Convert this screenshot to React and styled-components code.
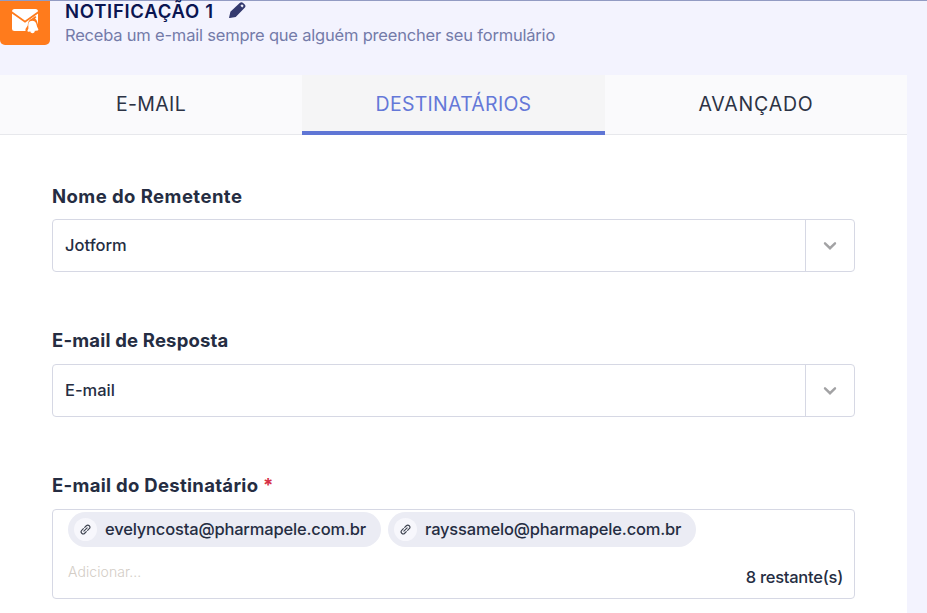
import React from 'react';
import styled, { createGlobalStyle } from 'styled-components';

const GlobalStyle = createGlobalStyle`
  *, *::before, *::after { box-sizing: border-box; }
  body {
    margin: 0;
    background: #f3f3fe;
    color: #252d42;
    font-family: Inter, "Open Sans", sans-serif;
    overflow: hidden;
  }
`;

const Page = styled.main`
  height: 613px;
  display: flex;
  flex-direction: column;
  border-top: 1px solid #929bc3;
`;

const Header = styled.header`
  height: 74px;
  flex: none;
  display: flex;
  gap: 15px;
`;

const Badge = styled.div`
  width: 50px;
  height: 44px;
  flex: none;
  background: #ff7b1c;
  border-radius: 0 0 5px 5px;
`;

const Heading = styled.div`
  display: flex;
  flex-direction: column;
`;

const TitleRow = styled.div`
  display: flex;
  align-items: flex-start;
  gap: 15px;
  height: 20px;
`;

const Title = styled.h1`
  margin: 0;
  font-size: 18.5px;
  line-height: 20px;
  font-weight: 600;
  letter-spacing: 0.72px;
  color: #0a1551;
  white-space: nowrap;
`;

const Subtitle = styled.p`
  margin: 3px 0 0;
  font-size: 16.5px;
  line-height: 22px;
  letter-spacing: -0.2px;
  color: #747ba9;
  white-space: nowrap;
`;

const Panel = styled.section`
  width: 907px;
  flex: 1;
  background: #fff;
`;

const Tabs = styled.nav`
  height: 60px;
  display: grid;
  grid-template-columns: 302px 303px 302px;
  background: #fafafc;
`;

const Tab = styled.button`
  border: 0;
  border-bottom: ${(p) => (p.$active ? '4px solid #5f76d5' : '1px solid #e7e8ec')};
  background: ${(p) => (p.$active ? '#f5f5f6' : 'transparent')};
  color: ${(p) => (p.$active ? '#6478d8' : '#2c3345')};
  font: 400 19.5px/24px Inter, "Open Sans", sans-serif;
  letter-spacing: ${(p) => p.$tracking}px;
  padding: ${(p) => (p.$active ? '2px 0 1px' : '0 0 1px')};
`;

const Form = styled.form`
  padding: 49px 52px 0;
  display: flex;
  flex-direction: column;
  gap: 56px;
`;

const Field = styled.div`
  display: flex;
  flex-direction: column;
  gap: ${(p) => p.$gap}px;
`;

const Label = styled.label`
  font-size: 18.5px;
  line-height: 24px;
  font-weight: 700;
  letter-spacing: ${(p) => p.$tracking}px;
  white-space: nowrap;
`;

const Required = styled.span`
  color: #d62f45;
`;

const Select = styled.div`
  height: 53px;
  display: flex;
  border: 1px solid #d6d8e4;
  border-radius: 4px;
`;

const Value = styled.div`
  flex: 1;
  display: flex;
  align-items: center;
  padding: 0 12px 1px;
  font-size: 16.5px;
  font-weight: 500;
`;

const Toggle = styled.div`
  width: 49px;
  display: flex;
  align-items: center;
  justify-content: center;
  border-left: 1px solid #d6d8e4;
`;

const Recipients = styled.div`
  height: 90px;
  flex: none;
  display: flex;
  flex-direction: column;
  justify-content: space-between;
  border: 1px solid #d6d8e4;
  border-radius: 4px;
  padding: 2px 11px 10px 15px;
`;

const Chips = styled.div`
  display: flex;
  gap: 7px;
`;

const Chip = styled.div`
  width: ${(p) => p.$width}px;
  height: 35px;
  display: flex;
  align-items: center;
  gap: 8px;
  padding: 0 0 1px 6px;
  border-radius: 18px;
  background: #ebecf4;
  font-size: 16.5px;
  font-weight: 500;
  letter-spacing: -0.18px;
  white-space: nowrap;
`;

const ChipIcon = styled.span`
  width: 23px;
  height: 23px;
  flex: none;
  display: flex;
  align-items: center;
  justify-content: center;
  border-radius: 50%;
  background: #f7f7fc;
`;

const Footer = styled.div`
  display: flex;
  justify-content: space-between;
  line-height: 22px;
`;

const Placeholder = styled.span`
  font-size: 14px;
  font-weight: 300;
  line-height: 12px;
  letter-spacing: 0.08px;
  color: #d3cdc6;
`;

const Remaining = styled.span`
  font-size: 16.5px;
  font-weight: 500;
  line-height: 22px;
  letter-spacing: -0.25px;
`;

const EnvelopeIcon = () => (
  <svg width="50" height="44" viewBox="0 0 50 44" aria-hidden="true">
    <rect x="12" y="8" width="26" height="22" rx="2.5" fill="#fff" />
    <path d="M11 10.8 25 20.7 39 10.8" fill="none" stroke="#ff7b1c" strokeWidth="1.9" />
    <path d="M25.5 31v-3l2.2-3.6c.2-3.4 1.5-5.8 4.3-6.8l3.2-2.6 1.6 1.6 2.4 14.4Z" fill="#ff7b1c" />
    <path d="M30 20.3c2.6-1.5 5.5-.3 6.3 2.5l.8 2.9 1.2 2.5c.2.7-.1 1.2-.8 1.3l-9.1 1.3c-.7.1-1.2-.5-.9-1.2l.9-2.2-.1-3.5c0-1.5.4-2.8 1.7-3.6Z" fill="#fff" />
    <path d="m30.2 30.2 4.6-.7c.3 3-3.9 3.8-4.6.7Z" fill="#fff" />
    <path d="m35 17.4 3-2.5v8.4c-.4-2.7-1.3-4.7-3-5.9Z" fill="#fff" />
  </svg>
);

const PencilIcon = () => (
  <svg width="19" height="18" viewBox="0 0 19 18" aria-hidden="true">
    <path d="M1.4 10.7 10.7 1.9c1.1-1 2.4-1 3.4 0l1.6 1.6c1 1 1 2.3 0 3.3l-9 9.1-5.9 1.2c-.5.1-.8-.2-.7-.7Z" fill="#343a6e" />
    <path d="m11.4 4.7 1-1c.4-.4.8-.4 1.2 0l.6.6c.4.4.4.8 0 1.2l-1 1Z" fill="#eeeefb" />
  </svg>
);

const ChevronIcon = () => (
  <svg width="14" height="10" viewBox="0 0 14 10" aria-hidden="true">
    <path d="m2 2.3 5 4.9 5-4.9" fill="none" stroke="#a2a2a4" strokeWidth="2.4" strokeLinecap="round" />
  </svg>
);

const LinkIcon = () => (
  <svg width="11" height="11" viewBox="0 0 12 12" fill="none" stroke="#3d4350" strokeWidth="1.2" strokeLinecap="round" aria-hidden="true">
    <path d="M4.2 7.8 7.8 4.2" />
    <path d="m5.1 3.7 1.8-1.8a2.25 2.25 0 0 1 3.2 3.2L8.3 6.9" />
    <path d="m6.9 8.3-1.8 1.8a2.25 2.25 0 0 1-3.2-3.2l1.8-1.8" />
  </svg>
);

const SelectField = ({ label, tracking, value, gap }) => (
  <Field $gap={gap}>
    <Label $tracking={tracking}>{label}</Label>
    <Select>
      <Value>{value}</Value>
      <Toggle><ChevronIcon /></Toggle>
    </Select>
  </Field>
);

const EmailChip = ({ email, width }) => (
  <Chip $width={width}>
    <ChipIcon><LinkIcon /></ChipIcon>
    {email}
  </Chip>
);

export default function App() {
  return (
    <>
      <GlobalStyle />
      <Page>
        <Header>
          <Badge><EnvelopeIcon /></Badge>
          <Heading>
            <TitleRow>
              <Title>NOTIFICAÇÃO 1</Title>
              <PencilIcon />
            </TitleRow>
            <Subtitle>Receba um e-mail sempre que alguém preencher seu formulário</Subtitle>
          </Heading>
        </Header>
        <Panel>
          <Tabs>
            <Tab $tracking={0.35}>E-MAIL</Tab>
            <Tab $active $tracking={0.28}>DESTINATÁRIOS</Tab>
            <Tab $tracking={0.8}>AVANÇADO</Tab>
          </Tabs>
          <Form>
            <SelectField label="Nome do Remetente" tracking={0.45} value="Jotform" gap={11} />
            <SelectField label="E-mail de Resposta" tracking={0.18} value="E-mail" gap={12} />
            <Field $gap={12}>
              <Label $tracking={0.3}>E-mail do Destinatário <Required>*</Required></Label>
              <Recipients>
                <Chips>
                  <EmailChip email="evelyncosta@pharmapele.com.br" width={313} />
                  <EmailChip email="rayssamelo@pharmapele.com.br" width={308} />
                </Chips>
                <Footer>
                  <Placeholder>Adicionar...</Placeholder>
                  <Remaining>8 restante(s)</Remaining>
                </Footer>
              </Recipients>
            </Field>
          </Form>
        </Panel>
      </Page>
    </>
  );
}
